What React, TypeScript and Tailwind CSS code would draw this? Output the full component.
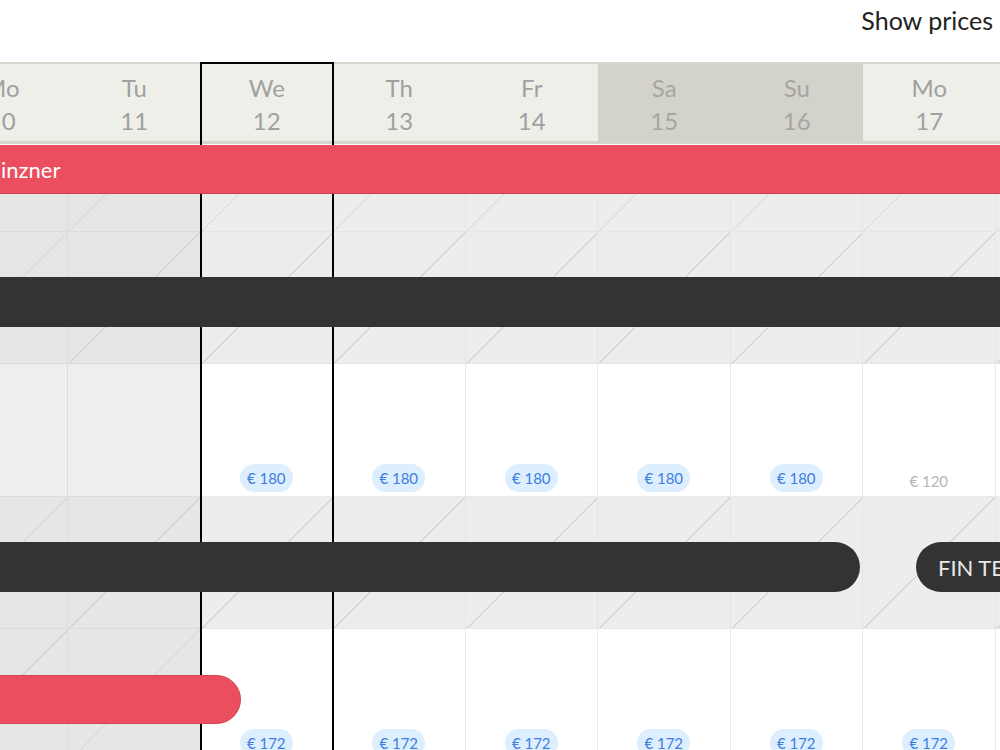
import React from "react";

type Day = { d: string; n: number; past?: boolean; weekend?: boolean };

const days: Day[] = [
  { d: "Mo", n: 10, past: true },
  { d: "Tu", n: 11, past: true },
  { d: "We", n: 12 },
  { d: "Th", n: 13 },
  { d: "Fr", n: 14 },
  { d: "Sa", n: 15, weekend: true },
  { d: "Su", n: 16, weekend: true },
  { d: "Mo", n: 17 },
  { d: "Tu", n: 18 },
];

type Kind = "hatchPast" | "hatchFuture" | "plainPast" | "white";

const cellCls: Record<Kind, string> = {
  hatchPast:
    "bg-[#e6e6e6] bg-[image:repeating-linear-gradient(135deg,transparent_0px,transparent_24.2px,#d3d3d3_24.2px,#d3d3d3_25.3px,transparent_25.3px,transparent_93.69px)] bg-fixed border-[#dcdcdc]",
  hatchFuture:
    "bg-[#ededed] bg-[image:repeating-linear-gradient(135deg,transparent_0px,transparent_24.2px,#d6d6d6_24.2px,#d6d6d6_25.3px,transparent_25.3px,transparent_93.69px)] bg-fixed border-[#e6e6da]",
  plainPast: "bg-[#eeeeee] border-[#dcdcdc]",
  white: "bg-white border-[#ebebe0]",
};

function Badge({ text, plain }: { text: string; plain?: boolean }) {
  if (plain) {
    return (
      <div className="h-[28px] flex items-center pt-[6px] text-[15px] text-[#b5b5b5]">
        {text}
      </div>
    );
  }
  return (
    <div className="h-[28px] px-[7px] flex items-center rounded-full bg-[#ddeeff] text-[15px] text-[#3c7fe0]">
      {text}
    </div>
  );
}

function Row({
  h,
  past,
  future,
  prices,
  barsTop = "pt-[45px]",
  children,
}: {
  h: string;
  past: Kind;
  future: Kind;
  prices?: (React.ReactNode | null)[];
  barsTop?: string;
  children?: React.ReactNode;
}) {
  return (
    <div className={`grid grid-cols-1 grid-rows-1 ml-[-64.5px] w-[1192.5px] ${h}`}>
      <div className="col-start-1 row-start-1 flex">
        {days.map((day, i) => (
          <div
            key={i}
            className={`w-[132.5px] shrink-0 h-full border-r border-b flex flex-col justify-end items-center pb-[4px] ${
              cellCls[day.past ? past : future]
            }`}
          >
            {prices ? prices[i] : null}
          </div>
        ))}
      </div>
      {children ? (
        <div className={`col-start-1 row-start-1 flex items-start ${barsTop}`}>{children}</div>
      ) : null}
    </div>
  );
}

export default function App() {
  const p180 = [
    null,
    null,
    ...Array(5)
      .fill(0)
      .map((_, i) => <Badge key={i} text="€ 180" />),
    <Badge key="p" text="€ 120" plain />,
    null,
  ];
  const p172 = [
    null,
    null,
    ...Array(7)
      .fill(0)
      .map((_, i) => <Badge key={i} text="€ 172" />),
  ];
  return (
    <div className="relative w-[1000px] h-[750px] overflow-hidden bg-white font-[family-name:Lato,sans-serif]">
      {/* Top bar */}
      <div className="h-[62px] flex justify-end items-start pt-[5px] pr-[7px]">
        <span className="text-[25px] leading-[30px] text-[#222]">Show prices</span>
      </div>

      {/* Header */}
      <div className="flex ml-[-64.5px] w-[1192.5px] border-t-2 border-b-[3px] border-[#d6d6ce] bg-[#d6d6ce]">
        {days.map((day, i) => (
          <div
            key={i}
            className={`w-[132.5px] shrink-0 h-[77px] flex flex-col items-center pt-[7px] text-[24px] leading-[33px] ${
              day.weekend ? "bg-[#d3d3cb] text-[#a6a6a0]" : "bg-[#efefea] text-[#a0a0a0]"
            }`}
          >
            <span>{day.d}</span>
            <span>{day.n}</span>
          </div>
        ))}
      </div>

      {/* Red reservation row */}
      <div className="h-[50px] pt-[1px]">
        <div className="relative z-20 h-[49px] bg-[#eb4e5e] border-b border-[#cc4150] flex items-center pl-[1px] text-[22px] text-white">
          inzner
        </div>
      </div>

      <Row h="h-[38px]" past="hatchPast" future="hatchFuture" />
      <Row h="h-[132px]" past="hatchPast" future="hatchFuture">
        <div className="relative z-20 w-full h-[50px] bg-[#333333]" />
      </Row>
      <Row h="h-[133px]" past="plainPast" future="white" prices={p180} />
      <Row h="h-[132px]" past="hatchPast" future="hatchFuture">
        <div className="relative z-20 shrink-0 w-[924.5px] h-[50px] bg-[#333333] rounded-r-full" />
        <div className="relative z-20 shrink-0 ml-[56px] w-[300px] h-[50px] bg-[#333333] rounded-l-full flex items-center pl-[22px] text-[22px] text-[#e8e8e8]">
          FIN TEST
        </div>
      </Row>
      <Row h="h-[133px]" past="hatchPast" future="white" prices={p172} barsTop="pt-[46px]">
        <div className="relative z-20 shrink-0 w-[305.5px] h-[49px] bg-[#eb4e5e] border border-[#cf4654] rounded-r-full" />
      </Row>

      {/* Today column highlight */}
      <div className="absolute z-10 left-[200px] top-[62px] w-[134px] h-[720px] border-2 border-b-0 border-black pointer-events-none" />
    </div>
  );
}
